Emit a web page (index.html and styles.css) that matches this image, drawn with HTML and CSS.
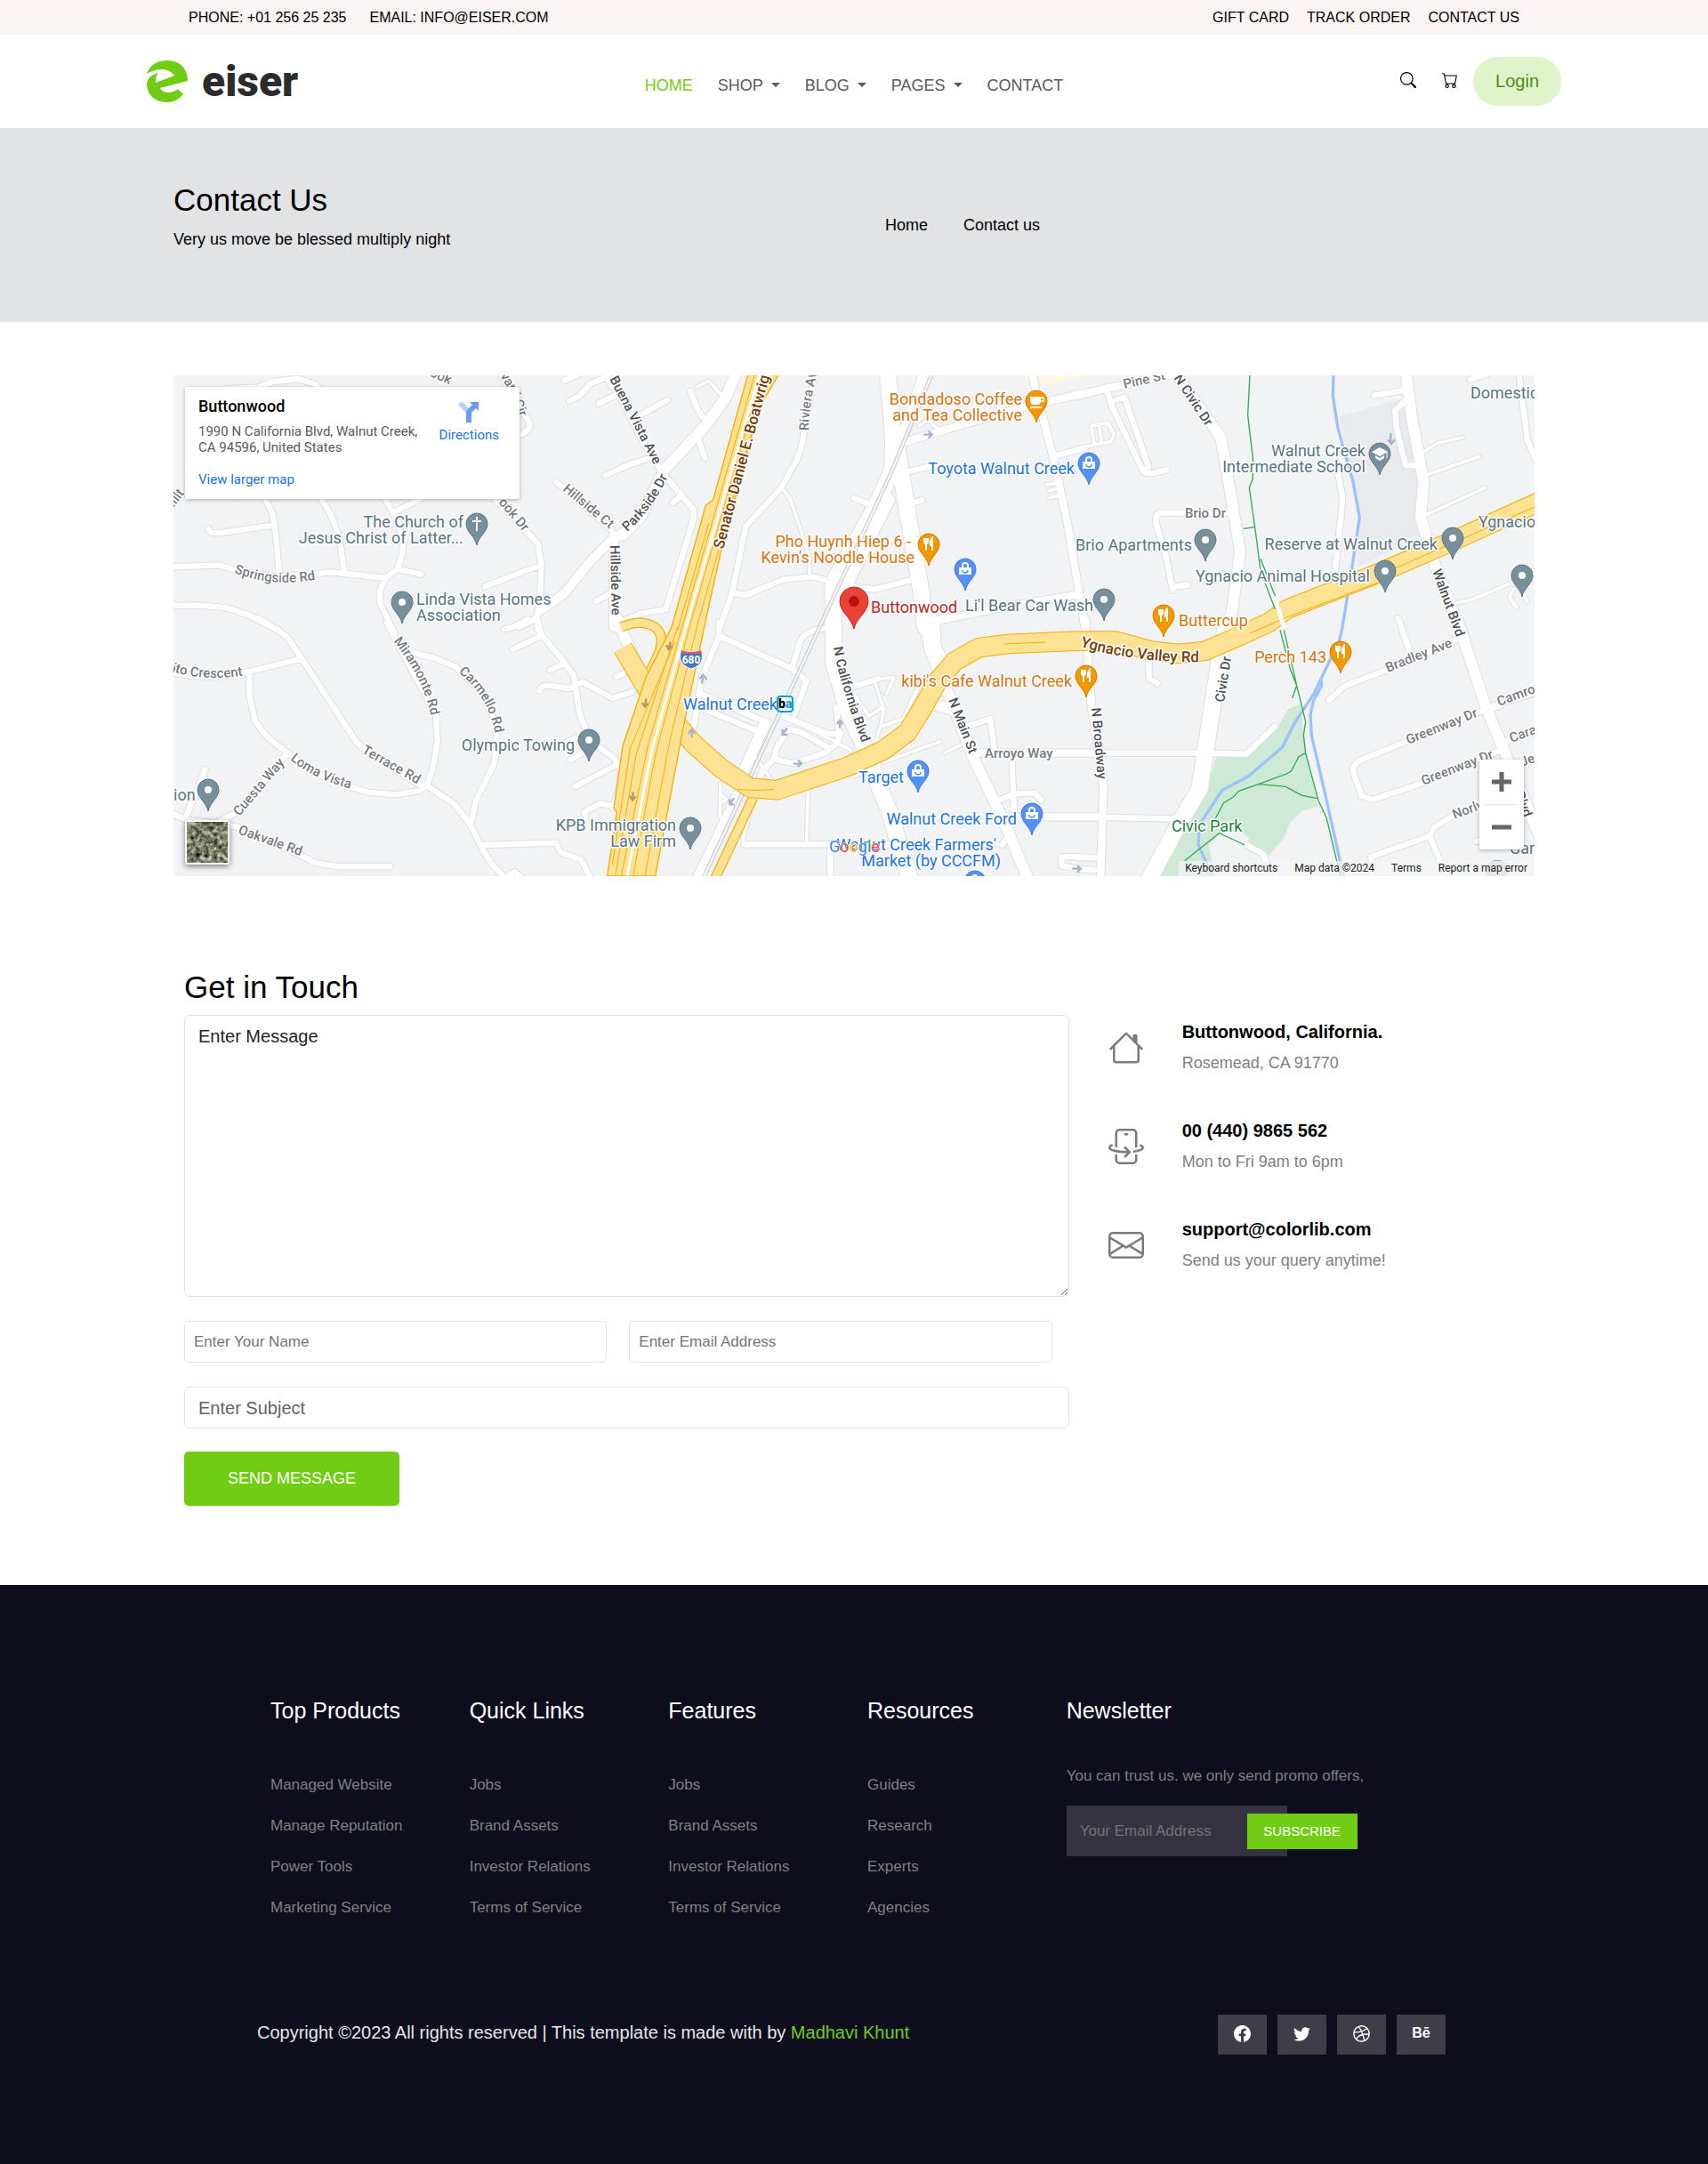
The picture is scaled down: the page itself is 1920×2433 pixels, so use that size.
FILE: index.html
```html
<!DOCTYPE html>
<html lang="en">
<head>
<meta charset="utf-8">
<meta name="viewport" content="width=device-width, initial-scale=1">
<title>Eiser - Contact Us</title>
<link rel="stylesheet" href="styles.css">
</head>
<body>
<div class="topbar">
  <div class="topbar-inner">
    <div class="topbar-group contact"><span>PHONE: +01 256 25 235</span><span>EMAIL: INFO@EISER.COM</span></div>
    <nav class="topbar-group" aria-label="Account"><a href="#">GIFT CARD</a><a href="#">TRACK ORDER</a><a href="#">CONTACT US</a></nav>
  </div>
</div>

<header class="header">
  <div class="header-inner">
    <a class="logo" href="#">
      <svg width="46" height="47" viewBox="0 0 46 47" aria-hidden="true"><path fill="#71cd14" d="M0 15C3 5 12 0 23 0C37 0 46 9 46 23L15 31C18 37 28 38 35 32L41 38C36 44 30 47 23 47C9 47 0 38 0 26C1 20 5 16 13 14C10 18 10 22 10 25L31 17C26 9 13 7 0 15Z"/></svg>
      <span>eiser</span>
    </a>
    <nav class="nav" aria-label="Main">
      <a class="active" href="#">HOME</a>
      <a class="drop" href="#">SHOP</a>
      <a class="drop" href="#">BLOG</a>
      <a class="drop" href="#">PAGES</a>
      <a href="#">CONTACT</a>
    </nav>
    <div class="actions">
      <a href="#" aria-label="Search"><svg width="18" height="18" viewBox="0 0 16 16" fill="currentColor"><path d="M11.742 10.344a6.5 6.5 0 1 0-1.397 1.398h-.001q.044.06.098.115l3.85 3.85a1 1 0 0 0 1.415-1.414l-3.85-3.85a1 1 0 0 0-.115-.1zM12 6.5a5.5 5.5 0 1 1-11 0 5.5 5.5 0 0 1 11 0"/></svg></a>
      <a href="#" aria-label="Cart"><svg width="18" height="18" viewBox="0 0 16 16" fill="currentColor"><path d="M0 1.500A.5.5 0 0 1 .5 1H2a.5.5 0 0 1 .485.379L2.890 3H14.500a.5.5 0 0 1 .491.592l-1.500 8A.5.5 0 0 1 13 12H4a.5.5 0 0 1-.491-.408L2.010 3.607 1.610 2H.5a.5.5 0 0 1-.5-.5M3.102 4l1.313 7h8.170l1.313-7zM5 12a2 2 0 1 0 0 4 2 2 0 0 0 0-4m7 0a2 2 0 1 0 0 4 2 2 0 0 0 0-4m-7 1a1 1 0 1 1 0 2 1 1 0 0 1 0-2m7 0a1 1 0 1 1 0 2 1 1 0 0 1 0-2"/></svg></a>
      <button class="login" type="button">Login</button>
    </div>
  </div>
</header>

<section class="banner">
  <div class="container banner-inner">
    <div>
      <h1>Contact Us</h1>
      <p>Very us move be blessed multiply night</p>
    </div>
    <nav class="crumbs" aria-label="Breadcrumb"><a href="#">Home</a><a href="#">Contact us</a></nav>
  </div>
</section>

<main class="container">
  <section class="map" aria-label="Map of Buttonwood, Walnut Creek">
    <svg class="map-art" viewBox="0 0 1530 563" preserveAspectRatio="xMidYMid slice">
      <defs>
        <path id="pin" d="M0 24C-2 14-12 9-12 0A12 12 0 1 1 12 0C12 9 2 14 0 24Z"/>
        <g id="pin-grey"><use href="#pin" fill="#78909c" stroke="#5f7681"/><circle r="4" fill="#fff"/></g>
        <g id="pin-food"><use href="#pin" fill="#f29900" stroke="#e37400"/><path d="M-5 -7v4q0 2 2 2v8M-3 -7v6M-1 -7v4q0 2-2 2M4 7v-14q-3 3-2 8h2" fill="none" stroke="#fff" stroke-width="2"/></g>
        <g id="pin-shop"><use href="#pin" fill="#5491f5" stroke="#3b78e7"/><path d="M-7 -2H7V6H-7Z" fill="#fff"/><path d="M-3 -2v-2a3 3 0 0 1 6 0v2" fill="none" stroke="#fff" stroke-width="2"/><path d="M-3 1a3 3 0 0 0 6 0" fill="none" stroke="#5491f5" stroke-width="1.500"/></g>
        <g id="roads" fill="none" stroke-linecap="round" stroke-linejoin="round">
          <g transform="translate(-15 -21)">
            <path class="w20" d="M215 65L300 62 350 42 435 33 490 50 520 75M320 430L350 490 358 540 372 690M133 540Q140 555 170 553L350 527M510 430L550 500 575 570 592 690M730 440L770 510 790 590 785 630 770 675 730 705 710 750 712 790 760 890M755 485L860 430M0 667L170 662 215 675 350 700 500 690 540 685 600 690 730 705M770 675L850 692M0 797L120 798 200 806 270 830 370 880M1100 440L1190 530 1245 590 1255 660 1252 780 1240 840 1245 880M1065 733L1215 675 1255 665M1305 380L1330 400 1490 540M1440 783L1490 755M1240 840L1180 870M1335 38L1385 15M1350 108L1385 90 1420 50 1480 25M1450 115L1510 85M1470 360L1560 318M1120 20L1215 180Q1225 200 1190 220"/>
            <path class="w30" d="M1560 530L1490 580 1420 650 1330 760 1250 815M1500 560L1500 870"/>
          </g>
          <g transform="translate(1515 -21)">
            <path class="w36" d="M385 10L345 100 280 190 140 340 60 500 0 560M1020 10L940 240 890 400M900 440L740 760"/>
            <path class="w20" d="M-60 20L0 110 60 230 130 345 240 475 238 510 145 810 60 825 0 850M0 330L90 300M50 160L150 105M228 75L255 140 280 175M255 235L277 300M170 450L200 425M650 0L612 205 608 240 590 300 535 400 415 530 370 750 325 880M370 755L415 762 540 710 640 700 700 715M965 345L1050 325M780 435L830 455M980 450L1010 442M775 735L850 742 970 712M1450 295L1560 265"/>
            <path class="w12" d="M250 60L290 40 330 85M540 405L565 440 600 540 630 640 630 700M1430 390L1460 385M1435 410L1465 405M1440 433L1470 428M1000 190L1030 170 1060 200"/>
            <path class="w54" d="M893 0L912 230 910 340 850 470 710 720 710 870M920 230L960 480 1005 740 1020 870"/>
            <path class="w26" d="M955 245L1100 200 1350 130 1560 80M1378 0L1400 100 1450 290 1500 520 1560 880M1050 850L1300 800 1540 760"/>
          </g>
          <g transform="translate(3045 -21) scale(1.014 1)">
            <path class="w26" d="M0 90L100 65 340 15"/>
            <path class="w20" d="M100 70L120 130 220 340Q225 355 260 350L300 340M130 105L160 95 240 330 220 340M520 485L280 485Q260 490 265 520L300 640 320 745M320 735L370 728M860 300L885 430 880 500 860 680M990 88L1090 72M1095 105L1060 140 1065 200 1095 325 1140 325M1310 35L1370 15M1470 0L1500 240 1530 310M1070 840L1110 955"/>
            <path class="w12" d="M0 270L60 255 115 245 125 220 105 180 50 190 60 255M75 190L85 250M1145 285L1200 250 1285 230M1170 355L1340 295M1165 490L1360 400M1250 790L1310 780 1450 720 1530 690M1455 740L1440 770 1465 805M1480 740L1500 785"/>
            <path class="w36" d="M320 0L480 230 510 400 545 620 510 870M1095 0L1115 160 1155 380 1145 500 1185 640 1280 890"/>
          </g>
          <g transform="translate(-15 834)">
            <path class="w20" d="M300 -15L350 15 400 50 450 125 630 400 650 420 840 545 870 550 960 610 1015 680 1060 770 1090 815 1140 870M0 165Q130 200 270 165L445 122M270 165L272 250 290 330 330 385 400 440 500 510 600 550 670 572 760 580 840 568 870 550 890 490 905 400 900 310 765 60 735 0M805 105L830 103 890 118 965 148 1060 240 1105 350 1105 420 1095 480 1035 600 1018 680M400 440L230 640 170 670M122 495L55 660M0 640L60 665 180 680 230 690 445 785 495 812 570 822 745 822M1060 750L1305 743 1320 775 1390 800 1425 870M1245 0L1255 40 1330 130 1365 180 1385 310 1410 370 1450 420 1500 455 1525 500 1515 570 1495 625M1495 618L1455 610 1400 640 1405 660M1130 22L1160 15 1210 -10M1160 90L1255 45M1285 160L1330 140M1250 230Q1255 212 1275 212L1350 222 1395 200 1495 255 1560 235M1355 462L1410 430M1370 552L1510 480M1340 405L1390 380M1510 182L1550 165M1140 860L1165 840 1190 860"/>
            <path class="w36" d="M1510 -15L1560 100"/>
          </g>
          <g transform="translate(1515 834)">
            <path class="w20" d="M325 0L325 45 265 190 235 380 285 440M325 45L570 155 620 195 580 310M570 155L600 60Q620 25 680 20M265 240L480 335M270 290L465 370 490 335M540 315L690 375 730 375 720 285M510 460L520 420 560 360 600 370 690 420M735 375L720 410 680 440 575 475 510 460 470 500 460 530M410 748L900 748M700 760L700 870M1160 350L1240 325 1255 440M1313 475L1320 640M1255 605L1320 578 1390 575 1412 600M1130 765L1165 870M1280 750L1310 700M1560 790L1480 790 1480 820 1560 835M750 225L860 190M780 515L860 480"/>
            <path class="w26" d="M1200 440L1600 440M1280 655L1600 655"/>
            <path class="w12" d="M560 320L770 430M625 560L620 740M440 600L405 730 415 748M780 240L830 315 870 290M850 200L880 290 870 350 860 380M870 350L945 325 1000 210M860 190L915 185 890 240M880 470L1070 402M1085 438L1150 410M470 370L440 440 500 530M330 540L328 655M330 580L350 595 330 610M900 748L1280 748"/>
            <path class="w54" d="M710 -20L712 140 760 300 820 430 860 540 900 640 970 870"/>
            <path class="w36" d="M1020 -20L1035 90 1110 270 1180 450 1280 660 1370 870M1050 -20L1055 80 1110 200M480 340L400 520M390 580L250 870M1040 275L1100 290"/>
          </g>
          <g transform="translate(3045 834) scale(1.014 1)">
            <path class="w20" d="M0 440L410 440 565 443 660 350M0 655L350 662M0 793L70 793M0 830L60 835M240 120L242 190 270 205M840 262L890 215 1030 160 1270 55M1410 280L1330 305 1100 400 935 468 920 490 925 520 950 585 985 597 1140 545 1410 430M1390 280L1530 235M1420 405L1530 360M1075 0L1110 100M1270 640L1190 690 1175 720 980 790 985 870M1175 720L1220 830M565 750L620 780 640 830M1330 738L1400 720"/>
            <path class="w26" d="M30 -10L50 280 90 550 80 870"/>
            <path class="w54" d="M500 0L480 100 410 560 340 680 240 870"/>
            <path class="w36" d="M1270 0L1360 280 1430 450 1540 720"/>
          </g>
        </g>
        <path id="valley" fill="none" stroke-linejoin="round" d="M1515 919L1595 1054 1685 1164 1755 1244 1845 1324 1945 1391 2035 1399 2135 1366 2275 1319 2395 1264 2475 1204 2525 1124 2575 1034 2635 964 2715 919 2815 906 3045 896 3177 896 3298 929 3390 939 3481 929 3572 889 3694 834 3755 789 4059 669 4292 569 4620 420"/>
        <path id="sr680" d="M1937 -1L1820 419 1795 439 1680 849 1595 1014 1515 1250 1485 1459 1495 1474 1463 1689 1625 1689 1720 1184 1790 849 1845 599 1975 109 2040 -1Z"/>
        <filter id="ground" x="0" y="0" width="100%" height="100%" color-interpolation-filters="sRGB"><feTurbulence type="fractalNoise" baseFrequency=".2" numOctaves="3" seed="8"/><feColorMatrix values=".9 .6 0 0 -.27  .9 .6 0 0 -.26  .9 .6 0 0 -.34  0 0 0 0 1"/></filter>
        <path id="t1" d="M68 222Q112 239 164 229"/>
        <path id="t2" d="M437 129L494 176"/>
        <path id="t3" d="M491 191L493 280"/>
        <path id="t4" d="M490 4L543 106"/>
        <path id="t5" d="M510 176Q540 150 560 105"/>
        <path id="t6" d="M618 196L684 -50"/>
        <path id="t7" d="M714 62Q714 30 730 -30"/>
        <path id="t8" d="M247 299Q282 340 291 390"/>
        <path id="t9" d="M320 334Q354 360 362 405"/>
        <path id="t10" d="M211 424L280 463"/>
        <path id="t11" d="M131 432Q160 456 208 467"/>
        <path id="t12" d="M74 496L130 430"/>
        <path id="t13" d="M72 515L150 543"/>
        <path id="t14" d="M-2 333Q40 346 92 335"/>
        <path id="t15" d="M-4 154L24 118"/>
        <path id="t16" d="M275 -5L334 21"/>
        <path id="t17" d="M354 -20L378 18 396 66"/>
        <path id="t18" d="M365 143L398 182"/>
        <path id="t19" d="M1415 220L1446 305"/>
        <path id="t20" d="M1124 3L1166 66"/>
        <path id="t21" d="M1069 15L1122 3"/>
        <path id="t22" d="M1181 368L1191 305"/>
        <path id="t23" d="M1032 374L1040 465"/>
        <path id="t24" d="M1365 334L1450 300"/>
        <path id="t25" d="M1388 415L1480 378"/>
        <path id="t26" d="M1405 461L1495 426"/>
        <path id="t27" d="M1490 372L1550 350"/>
        <path id="t28" d="M1504 413L1560 392"/>
        <path id="t29" d="M1440 499L1490 480"/>
        <path id="t30" d="M1508 470L1526 520"/>
        <path id="t31" d="M742 306Q748 345 778 424"/>
        <path id="t32" d="M871 365L898 435"/>
        <path id="t33" d="M1019 305Q1090 325 1170 322"/>
        <path id="t34" d="M1516 440L1560 424"/>
      </defs>
      <rect width="1530" height="563" fill="#f1f3f4"/>
      <g transform="scale(.33333)">
        <path fill="#e8eaed" d="M3932 139L4145 79 4191 299 4206 359 4191 479 4206 539 3993 649 4000 479 3978 359Z"/>
        <path fill="#fef7e0" d="M2855 0H3080L2960 30Q2900 35 2855 0Z"/>
        <path fill="#ceead6" d="M3800 1109L3760 1124 3724 1184 3618 1284 3516 1289 3490 1374 3450 1444 3400 1554 3324 1700H3515L3491 1584 3527 1546 3592 1534 3628 1559 3618 1584 3694 1619 3745 1559 3765 1509 3805 1469 3861 1452 3856 1434 3821 1274Z"/>
        <g fill="none" stroke="#9dc1fa" stroke-width="10">
          <path d="M3912 0L3910 69 3927 179 3978 359 4000 479 3973 659 3942 849 3932 894 3846 1074 3780 1174 3740 1254 3623 1354 3537 1399 3461 1514 3456 1584 3510 1700M3871 1024V1049L3844 1099 3834 1144 3838 1214 3882 1404 3948 1700"/>
        </g>
        <use href="#roads" class="casing"/>
        <use href="#roads" class="surface"/>
        <path d="M2560 -10L2420 329 1785 1700" fill="none" stroke="#c9ccd1" stroke-width="14"/>
        <path d="M2560 -10L2420 329 1785 1700" fill="none" stroke="#f5f6f7" stroke-width="7"/>
        <path d="M1510 849Q1580 820 1625 850Q1660 880 1635 940L1580 1060M1955 1424L1825 1700" fill="none" stroke="#f9ab00" stroke-width="34"/>
        <path d="M1510 849Q1580 820 1625 850Q1660 880 1635 940L1580 1060M1955 1424L1825 1700" fill="none" stroke="#fde293" stroke-width="27"/>
        <use href="#valley" stroke="#f9ab00" stroke-width="68"/>
        <use href="#valley" stroke="#fde293" stroke-width="62"/>
        <path d="M1900 1397Q1960 1402 2025 1397M3630 870L3750 818 4060 700M4110 655L4600 440M2800 906L2940 900" fill="none" stroke="#f9ab00" stroke-width="3"/>
        <use href="#sr680" fill="#fde293" stroke="#f9ab00" stroke-width="4"/>
        <g fill="none" stroke="#f9ab00" stroke-width="3">
          <path d="M1960 -1L1715 849 1600 1250 1510 1689M1985 -1L1740 849 1625 1280 1550 1689M2005 0L1765 849 1670 1250 1590 1689M1805 500L1700 860M1700 849L1560 1280 1490 1689M1690 900L1540 1260 1480 1650"/>
        </g>
        <path d="M1975 0L1728 849 1613 1265 1530 1689" fill="none" stroke="#fff" stroke-width="9"/>
        <g fill="none" stroke="#34a853" stroke-width="4">
          <path d="M3630 -1L3623 134 3640 279V349L3628 379 3648 519 3666 659 3715 789M3666 619L3715 744M3608 517L3646 512M3732 859L3767 994 3788 1046 3773 1089M3745 859L3788 1046 3818 1169 3811 1214 3818 1274 3861 1434 3889 1494 3922 1634 3940 1700M3818 1274L3795 1286 3770 1334 3755 1344 3659 1379 3593 1402 3574 1422 3542 1442 3514 1494M3659 1379L3750 1387 3806 1417 3858 1427M3410 1637L3527 1544 3613 1584"/>
        </g>
        <path d="M3715 750L3745 850" stroke="#fff" stroke-width="14"/>
        <g fill="none" stroke="#aab0cc" stroke-width="7">
          <path d="M2530 200h28m-12-12l12 12-12 12M1782 1040l4-28m-12 12l12-14 12 16M1748 1222v-26m-12 12l12-14 12 14M2247 1190v-24m-10 10l10-12 10 12M2090 1310h26m-10-12l12 10-12 12M2070 1190l-16 20m0-16v18h18M1890 1425l-12 20m-2-16v18h16M4105 195v34m-10-12l12 14 12-14M3030 1664h28m-10-10l12 10-12 12"/>
          <path stroke="#b09a60" d="M1676 899l-6 24m-8-14l8 16 12-12M1594 1090l-4 26m-10-12l10 14 10-12M1550 1405l-2 26m-9-12l9 14 11-12"/>
        </g>
      </g>

      <g class="lbl road">
        <text><textPath href="#t1">Springside Rd</textPath></text>
        <text><textPath href="#t2">Hillside Ct</textPath></text>
        <text><textPath href="#t8">Miramonte Rd</textPath></text>
        <text><textPath href="#t9">Carmello Rd</textPath></text>
        <text><textPath href="#t10">Terrace Rd</textPath></text>
        <text><textPath href="#t11">Loma Vista</textPath></text>
        <text><textPath href="#t12">Cuesta Way</textPath></text>
        <text><textPath href="#t13">Oakvale Rd</textPath></text>
        <text><textPath href="#t14">ito Crescent</textPath></text>
        <text><textPath href="#t15">Hillt</textPath></text>
        <text><textPath href="#t16">brook</textPath></text>
        <text><textPath href="#t17">Harvard Cir</textPath></text>
        <text><textPath href="#t18">ook Dr</textPath></text>
        <text><textPath href="#t7">Riviera Ave</textPath></text>
        <text><textPath href="#t21">Pine St</textPath></text>
        <text><textPath href="#t24">Bradley Ave</textPath></text>
        <text><textPath href="#t25">Greenway Dr</textPath></text>
        <text><textPath href="#t26">Greenway Dr</textPath></text>
        <text><textPath href="#t27">Camro</textPath></text>
        <text><textPath href="#t28">Cara</textPath></text>
        <text><textPath href="#t29">Norlyn</textPath></text>
        <text><textPath href="#t34">Jer</textPath></text>
        <text x="1137" y="160">Brio Dr</text>
        <text x="912" y="430">Arroyo Way</text>
      </g>
      <g class="lbl road main-road">
        <text><textPath href="#t3">Hillside Ave</textPath></text>
        <text><textPath href="#t4">Buena Vista Ave</textPath></text>
        <text><textPath href="#t5">Parkside Dr</textPath></text>
        <text><textPath href="#t19">Walnut Blvd</textPath></text>
        <text><textPath href="#t20">N Civic Dr</textPath></text>
        <text><textPath href="#t22">Civic Dr</textPath></text>
        <text><textPath href="#t23">N Broadway</textPath></text>
        <text><textPath href="#t30">Blvd</textPath></text>
        <text><textPath href="#t31">N California Blvd</textPath></text>
        <text><textPath href="#t32">N Main St</textPath></text>
      </g>
      <g class="lbl highway">
        <text><textPath href="#t6">Senator Daniel E. Boatwright</textPath></text>
        <text><textPath href="#t33">Ygnacio Valley Rd</textPath></text>
      </g>

      <use href="#pin-grey" x="257" y="255"/><use href="#pin-grey" x="1160" y="185"/>
      <use href="#pin-grey" x="1438" y="183"/><use href="#pin-grey" x="1362" y="220"/>
      <use href="#pin-grey" x="1516" y="225"/><use href="#pin-grey" x="1046" y="252"/>
      <use href="#pin-grey" x="467" y="410"/><use href="#pin-grey" x="39" y="466"/>
      <use href="#pin-grey" x="581" y="509"/><use href="#pin-grey" x="1488" y="557" opacity=".5"/>
      <g transform="translate(341 167)"><use href="#pin" fill="#78909c" stroke="#5f7681"/><path d="M0 -8V8M-5 -3H5" stroke="#fff" stroke-width="2"/></g>
      <g transform="translate(1356 88)"><use href="#pin" fill="#78909c" stroke="#5f7681"/><path d="M-9 -2L0 -7 9 -2 0 3ZM-5 2L0 5 5 2V5L0 8-5 5Z" fill="#fff"/><path d="M8 -2V5" stroke="#fff"/></g>
      <g transform="translate(970 29)"><use href="#pin" fill="#f29900" stroke="#e37400"/><path d="M-7 -5H5V0Q5 4 1 4H-3Q-7 4-7 0ZM-7 6H6V8H-7Z" fill="#fff"/><path d="M5 -4H8V0H5" fill="none" stroke="#fff" stroke-width="1.500"/></g>
      <use href="#pin-food" x="849" y="190"/><use href="#pin-food" x="1113" y="270"/>
      <use href="#pin-food" x="1312" y="311"/><use href="#pin-food" x="1026" y="338"/>
      <use href="#pin-shop" x="1029" y="99"/><use href="#pin-shop" x="890" y="218"/>
      <use href="#pin-shop" x="837" y="445"/><use href="#pin-shop" x="965" y="493"/><use href="#pin-shop" x="901" y="569"/>
      <g transform="translate(765 254)"><path d="M0 31C-3 18-16 12-16 0A16 16 0 1 1 16 0C16 12 3 18 0 31Z" fill="#ea4335" stroke="#c5221f"/><circle r="6" fill="#b31412"/></g>

      <g class="lbl place grey">
        <g class="end">
          <text x="326" y="171">The Church of</text><text x="326" y="189">Jesus Christ of Latter...</text>
          <text x="1340" y="91">Walnut Creek</text><text x="1340" y="109">Intermediate School</text>
          <text x="1145" y="197">Brio Apartments</text><text x="1421" y="196">Reserve at Walnut Creek</text>
          <text x="1345" y="232">Ygnacio Animal Hospital</text><text x="451" y="422">Olympic Towing</text>
          <text x="565" y="512">KPB Immigration</text><text x="565" y="530">Law Firm</text>
        </g>
        <text x="273" y="258">Linda Vista Homes</text><text x="273" y="276">Association</text>
        <text x="890" y="265">Li'l Bear Car Wash</text><text x="1458" y="26">Domestic</text>
        <text x="1467" y="171">Ygnacio</text><text x="0" y="478">ion</text><text x="1502" y="538">Gary</text>
      </g>
      <g class="lbl place orange">
        <g class="end">
          <text x="954" y="33">Bondadoso Coffee</text><text x="954" y="51">and Tea Collective</text>
          <text x="829" y="193">Pho Huynh Hiep 6 -</text><text x="833" y="211">Kevin's Noodle House</text>
          <text x="1296" y="323">Perch 143</text><text x="1010" y="350">kibi's Cafe Walnut Creek</text>
        </g>
        <text x="1130" y="282">Buttercup</text>
      </g>
      <g class="lbl place blue">
        <g class="end">
          <text x="1013" y="111">Toyota Walnut Creek</text><text x="821" y="458">Target</text>
          <text x="948" y="505">Walnut Creek Ford</text><text x="925" y="534">Walnut Creek Farmers'</text><text x="930" y="552">Market (by CCCFM)</text>
        </g>
        <text x="573" y="376">Walnut Creek</text>
      </g>
      <text class="lbl place red" x="784" y="267">Buttonwood</text>
      <text class="lbl place green" x="1122" y="513">Civic Park</text>

      <g transform="translate(582 318)"><path d="M-11 -9Q0 -5 11 -9Q15 3 8 8Q4 11 0 12Q-4 11-8 8Q-15 3-11 -9Z" fill="#3f76c9" stroke="#fff"/><path d="M-11 -9Q0 -5 11 -9L12 -5H-12Z" fill="#d6605b"/><text class="shield" x="0" y="6">680</text></g>
      <g transform="translate(679 361)"><rect width="17" height="17" rx="3" fill="#fff" stroke="#0b9ddb" stroke-width="2"/><text class="bart" x="1" y="13">b<tspan fill="#0b9ddb">a</tspan></text></g>
      <text class="google" x="737" y="536"><tspan fill="#4285f4">G</tspan><tspan fill="#ea4335">o</tspan><tspan fill="#fbbc04">o</tspan><tspan fill="#4285f4">g</tspan><tspan fill="#34a853">l</tspan><tspan fill="#ea4335">e</tspan></text>
    </svg>

    <div class="map-card">
      <div class="map-place">
        <strong>Buttonwood</strong>
        <address>1990 N California Blvd, Walnut Creek, CA 94596, United States</address>
        <a href="#">View larger map</a>
      </div>
      <a class="directions" href="#">
        <svg width="24" height="24" viewBox="0 0 24 24" aria-hidden="true"><path d="M0 4L4 0 13 9 9 13Z" fill="#b6cffb"/><path d="M9 24V14Q9 11 11 9L16 4 13 1H23V11L20 8 15 13V24Z" fill="#6a9af8"/></svg>
        Directions
      </a>
    </div>
    <button class="satellite" type="button" aria-label="Show satellite imagery"><svg width="46" height="46" aria-hidden="true"><rect width="46" height="46" filter="url(#ground)"/></svg></button>
    <div class="zoom">
      <button type="button" aria-label="Zoom in"><svg width="22" height="22" viewBox="0 0 22 22"><path d="M11 0V22M0 11H22" stroke="#666" stroke-width="5"/></svg></button>
      <button type="button" aria-label="Zoom out"><svg width="22" height="22" viewBox="0 0 22 22"><path d="M0 11H22" stroke="#666" stroke-width="5"/></svg></button>
    </div>
    <div class="map-terms"><a href="#">Keyboard shortcuts</a><span>Map data ©2024</span><a href="#">Terms</a><a href="#">Report a map error</a></div>
  </section>

  <section class="contact-grid">
    <form class="contact-form">
      <h2>Get in Touch</h2>
      <textarea class="field tall" aria-label="Message">Enter Message</textarea>
      <div class="pair">
        <input class="field small" type="text" placeholder="Enter Your Name" aria-label="Name">
        <input class="field small" type="email" placeholder="Enter Email Address" aria-label="Email">
      </div>
      <input class="field" type="text" placeholder="Enter Subject" aria-label="Subject">
      <button class="send" type="submit">SEND MESSAGE</button>
    </form>
    <div class="info">
      <div class="info-item">
        <svg width="40" height="40" viewBox="0 0 16 16" aria-hidden="true"><path d="M8.707 1.500a1 1 0 0 0-1.414 0L.646 8.146a.5.5 0 0 0 .708.708L2 8.207V13.500A1.500 1.500 0 0 0 3.500 15h9a1.500 1.500 0 0 0 1.500-1.500V8.207l.646.647a.5.5 0 0 0 .708-.708L13 5.793V2.500a.5.5 0 0 0-.5-.5h-1a.5.5 0 0 0-.5.5v1.293zM13 7.207V13.500a.5.5 0 0 1-.5.5h-9a.5.5 0 0 1-.5-.5V7.207l5-5z"/></svg>
        <div><h3>Buttonwood, California.</h3><p>Rosemead, CA 91770</p></div>
      </div>
      <div class="info-item">
        <svg width="40" height="40" viewBox="0 0 16 16" aria-hidden="true"><path d="M11 1H5a1 1 0 0 0-1 1v6a.5.5 0 0 1-1 0V2a2 2 0 0 1 2-2h6a2 2 0 0 1 2 2v6a.5.5 0 0 1-1 0V2a1 1 0 0 0-1-1m1 13a1 1 0 0 1-1 1H5a1 1 0 0 1-1-1v-2a.5.5 0 0 0-1 0v2a2 2 0 0 0 2 2h6a2 2 0 0 0 2-2v-2a.5.5 0 0 0-1 0zM1.713 7.954a.5.5 0 1 0-.419-.908c-.347.16-.654.348-.882.57C.184 7.842 0 8.139 0 8.500c0 .546.408.94.823 1.201.44.278 1.043.51 1.745.696C3.978 10.773 5.898 11 8 11q.148 0 .294-.002l-1.148 1.148a.5.5 0 0 0 .708.708l2-2a.5.5 0 0 0 0-.708l-2-2a.5.5 0 1 0-.708.708l1.145 1.144L8 10c-2.040 0-3.870-.221-5.174-.569-.656-.175-1.151-.374-1.470-.575C1.012 8.639 1 8.506 1 8.500c0-.003 0-.059.112-.17.115-.112.31-.242.6-.376Zm12.993-.908a.5.5 0 0 0-.419.908c.292.134.486.264.6.377.113.11.113.166.113.169s0 .065-.13.187c-.132.122-.352.26-.677.4-.645.28-1.596.523-2.763.687a.5.5 0 0 0 .14.99c1.212-.17 2.260-.43 3.020-.758.38-.164.713-.357.96-.587.246-.229.45-.537.45-.919 0-.362-.184-.66-.412-.883s-.535-.411-.882-.571M7.500 2a.5.5 0 0 0 0 1h1a.5.5 0 0 0 0-1z"/></svg>
        <div><h3>00 (440) 9865 562</h3><p>Mon to Fri 9am to 6pm</p></div>
      </div>
      <div class="info-item">
        <svg width="40" height="40" viewBox="0 0 16 16" aria-hidden="true"><path d="M0 4a2 2 0 0 1 2-2h12a2 2 0 0 1 2 2v8a2 2 0 0 1-2 2H2a2 2 0 0 1-2-2zm2-1a1 1 0 0 0-1 1v.217l7 4.200 7-4.200V4a1 1 0 0 0-1-1zm13 2.383-4.708 2.825L15 11.105zm-.034 6.876-5.640-3.471L8 9.583l-1.326-.795-5.640 3.470A1 1 0 0 0 2 13h12a1 1 0 0 0 .966-.741M1 11.105l4.708-2.897L1 5.383z"/></svg>
        <div><h3>support@colorlib.com</h3><p>Send us your query anytime!</p></div>
      </div>
    </div>
  </section>
</main>

<footer class="footer">
  <div class="footer-inner">
    <div class="footer-cols">
      <div><h2>Top Products</h2><ul><li><a href="#">Managed Website</a></li><li><a href="#">Manage Reputation</a></li><li><a href="#">Power Tools</a></li><li><a href="#">Marketing Service</a></li></ul></div>
      <div><h2>Quick Links</h2><ul><li><a href="#">Jobs</a></li><li><a href="#">Brand Assets</a></li><li><a href="#">Investor Relations</a></li><li><a href="#">Terms of Service</a></li></ul></div>
      <div><h2>Features</h2><ul><li><a href="#">Jobs</a></li><li><a href="#">Brand Assets</a></li><li><a href="#">Investor Relations</a></li><li><a href="#">Terms of Service</a></li></ul></div>
      <div><h2>Resources</h2><ul><li><a href="#">Guides</a></li><li><a href="#">Research</a></li><li><a href="#">Experts</a></li><li><a href="#">Agencies</a></li></ul></div>
      <div>
        <h2>Newsletter</h2>
        <p>You can trust us. we only send promo offers,</p>
        <form class="subscribe">
          <input type="email" placeholder="Your Email Address" aria-label="Your email address">
          <button type="submit">SUBSCRIBE</button>
        </form>
      </div>
    </div>
    <div class="footer-bottom">
      <p>Copyright ©2023 All rights reserved | This template is made with by <a href="#">Madhavi Khunt</a></p>
      <div class="social">
        <a href="#" aria-label="Facebook"><svg width="19" height="19" viewBox="0 0 16 16" fill="#fff"><path d="M16 8.049c0-4.446-3.582-8.050-8-8.050C3.580 0-.002 3.603-.002 8.050c0 4.017 2.926 7.347 6.750 7.951v-5.625h-2.030V8.050H6.750V6.275c0-2.017 1.195-3.131 3.022-3.131.876 0 1.791.157 1.791.157v1.980h-1.009c-.993 0-1.303.621-1.303 1.258v1.510h2.218l-.354 2.326H9.250V16c3.824-.604 6.750-3.934 6.750-7.951"/></svg></a>
        <a href="#" aria-label="Twitter"><svg width="19" height="19" viewBox="0 0 16 16" fill="#fff"><path d="M5.026 15c6.038 0 9.341-5.003 9.341-9.334q.002-.211-.006-.422A6.700 6.700 0 0 0 16 3.542a6.700 6.700 0 0 1-1.889.518 3.300 3.300 0 0 0 1.447-1.817 6.500 6.500 0 0 1-2.087.793A3.286 3.286 0 0 0 7.875 6.030a9.320 9.320 0 0 1-6.767-3.429 3.290 3.290 0 0 0 1.018 4.382A3.300 3.300 0 0 1 .64 6.575v.045a3.290 3.290 0 0 0 2.632 3.218 3.200 3.200 0 0 1-.865.115 3 3 0 0 1-.614-.057 3.280 3.280 0 0 0 3.067 2.277A6.600 6.600 0 0 1 .78 13.580a6 6 0 0 1-.78-.045A9.340 9.340 0 0 0 5.026 15"/></svg></a>
        <a href="#" aria-label="Dribbble"><svg width="19" height="19" viewBox="0 0 16 16" fill="none" stroke="#fff" stroke-width="1.200"><circle cx="8" cy="8" r="7.300"/><path d="M5.300 1.200Q9 6 10.800 14.700M.8 6.600Q8 7 13.200 2.900M3 13.300Q6 7.500 15.300 8.600"/></svg></a>
        <a class="behance" href="#" aria-label="Behance">Bē</a>
      </div>
    </div>
  </div>
</footer>
</body>
</html>
```
FILE: styles.css
```css
* { box-sizing: border-box; }
body {
  margin: 0;
  background: #fff;
  color: #000;
  font-family: "Liberation Sans", Arial, sans-serif;
  font-size: 18px;
  line-height: 26px;
}
h1, h2, h3, p, ul { margin: 0; padding: 0; font-weight: 400; }
ul { list-style: none; }
a { color: inherit; text-decoration: none; }
svg { display: block; }
button, input, textarea { font-family: inherit; }
button { cursor: pointer; border: 0; }

.container { max-width: 1530px; margin: 0 auto; }

/* Top bar */
.topbar { background: #faf4f4; }
.topbar-inner {
  max-width: 1496px;
  margin: 0 auto;
  padding: 8px 0 7px;
  display: flex;
  justify-content: space-between;
  font-size: 16px;
  line-height: 24px;
}
.topbar-group { display: flex; gap: 20px; }
.topbar-group.contact { gap: 26px; }

/* Header */
.header-inner {
  max-width: 1590px;
  min-height: 105px;
  margin: 0 auto;
  display: grid;
  grid-template-columns: 1fr auto 1fr;
  align-items: center;
}
.logo { display: flex; align-items: center; gap: 16px; }
.logo span {
  color: #2c2c2c;
  font-family: Roboto, sans-serif;
  font-weight: 900;
  font-size: 48px;
  line-height: 47px;
}
.nav { display: flex; gap: 28px; padding-top: 8px; color: #5a5a5a; }
.nav .active { color: #71cd14; }
.drop { display: flex; align-items: center; gap: 9px; }
.drop::after {
  content: "";
  border: 5px solid transparent;
  border-top-color: currentColor;
  border-bottom: 0;
}
.actions { display: flex; align-items: center; justify-content: flex-end; gap: 29px; }
.actions a { padding-bottom: 4px; }
.login {
  margin-left: -12px;
  padding: 0 25px;
  height: 55px;
  border-radius: 28px;
  background: #dff4cb;
  color: #4e8c10;
  font-size: 20px;
}

/* Page banner */
.banner { background: #e2e3e5; }
.banner-inner {
  min-height: 218px;
  display: grid;
  grid-template-columns: 1fr 1fr;
  align-items: center;
}
.banner-inner > div { padding-bottom: 20px; }
h1, .contact-form h2 { font-size: 35px; line-height: 42px; }
.banner p { margin-top: 10px; }
.crumbs { display: flex; gap: 40px; padding-left: 35px; }

/* Map */
.map {
  position: relative;
  margin-top: 60px;
  height: 563px;
  overflow: hidden;
  font-family: Roboto, sans-serif;
}
.map-art { width: 100%; height: 100%; }
.w12 { stroke-width: calc(11px + var(--edge)); }
.w20 { stroke-width: calc(19px + var(--edge)); }
.w26 { stroke-width: calc(25px + var(--edge)); }
.w30 { stroke-width: calc(30px + var(--edge)); }
.w36 { stroke-width: calc(36px + var(--edge)); }
.w54 { stroke-width: calc(54px + var(--edge)); }
.casing { stroke: #dcdee2; --edge: 6px; }
.surface { stroke: #fff; --edge: 0px; }
.lbl { stroke: #fff; stroke-width: 3px; stroke-linejoin: round; paint-order: stroke; }
.road { fill: #75797e; font-size: 15px; font-weight: 500; }
.main-road { fill: #4d5156; }
.highway { fill: #733b05; font-size: 17px; font-weight: 500; }
.place { font-size: 18px; }
.end { text-anchor: end; }
.grey { fill: #56747f; }
.orange { fill: #d9730b; }
.blue { fill: #1a73e8; }
.red { fill: #c5221f; }
.green { fill: #188038; }
.shield { fill: #fff; font-size: 12px; font-weight: 700; text-anchor: middle; }
.bart { font-size: 14px; font-weight: 900; }
.google { font-size: 18px; stroke: #fff; stroke-width: 1px; paint-order: stroke; }

.map-card {
  position: absolute;
  left: 13px;
  top: 13px;
  width: 376px;
  padding: 13px 23px 13px 15px;
  display: flex;
  justify-content: space-between;
  background: #fff;
  border-radius: 2px;
  box-shadow: 0 1px 4px rgba(0, 0, 0, .3);
  font-size: 15px;
  line-height: 18px;
}
.map-place { width: 250px; }
.map-place strong { display: block; font-size: 18px; font-weight: 500; margin-bottom: 10px; }
.map-place address { font-style: normal; color: #5b5b5b; margin-bottom: 18px; }
.map-card a { color: #1a73e8; }
.directions { display: flex; flex-direction: column; align-items: center; gap: 5px; padding-top: 3px; }
.satellite {
  position: absolute;
  left: 13px;
  bottom: 13px;
  padding: 2px;
  background: #fff;
  border-radius: 3px;
  box-shadow: 0 2px 6px rgba(0, 0, 0, .5);
}
.zoom {
  position: absolute;
  right: 12px;
  bottom: 30px;
  width: 50px;
  padding: 0 6px;
  background: #fff;
  border-radius: 2px;
  box-shadow: 0 1px 4px rgba(0, 0, 0, .3);
}
.zoom button {
  display: flex;
  align-items: center;
  justify-content: center;
  width: 100%;
  height: 50px;
  padding: 0;
  background: none;
}
.zoom button + button { border-top: 1px solid #e6e6e6; height: 51px; }
.map-terms {
  position: absolute;
  right: 0;
  bottom: 0;
  padding: 0 8px 0 7px;
  display: flex;
  gap: 19px;
  background: rgba(245, 245, 245, .7);
  color: #222;
  font-size: 12px;
  line-height: 17px;
}

/* Contact form */
.contact-grid {
  padding: 104px 12px 89px;
  display: grid;
  grid-template-columns: 2fr 1fr;
  gap: 14px;
}
.contact-form { display: flex; flex-direction: column; align-items: flex-start; }
.contact-form h2 { margin-bottom: 10px; }
.field {
  display: block;
  width: 100%;
  height: 47px;
  margin: 0;
  padding: 8px 15px 7px;
  border: 1px solid #dee2e6;
  border-radius: 7px;
  color: #212529;
  font-size: 20px;
  line-height: 30px;
}
.field::placeholder { color: #5f6469; }
.field.tall { height: 317px; resize: vertical; }
.pair {
  width: 100%;
  padding-right: 19px;
  margin: 27px 0;
  display: grid;
  grid-template-columns: 1fr 1fr;
  gap: 25px;
}
.field.small { padding: 0 10px; border-radius: 5px; font-size: 17px; }
.field.small::placeholder { color: #757575; }
.send {
  margin-top: 26px;
  padding: 0 49px;
  height: 61px;
  border-radius: 5px;
  background: #71cd14;
  color: #fff;
  font-size: 18px;
}
.info { padding: 59px 0 0 30px; display: flex; flex-direction: column; gap: 51px; }
.info-item { display: flex; gap: 43px; }
.info-item svg { margin-top: 10px; fill: #7b7b7b; }
.info h3 { font-size: 20px; line-height: 24px; font-weight: 700; margin-bottom: 10px; }
.info p { color: #808080; }

/* Footer */
.footer { background: #0e0d1e; color: #808080; }
.footer-inner { max-width: 1342px; margin: 0 auto; padding: 126px 0 123px; }
.footer-cols { display: grid; grid-template-columns: repeat(4, 1fr) 2fr; font-size: 17px; }
.footer-cols > div { padding-left: 15px; }
.footer h2 { color: #fff; font-size: 25px; line-height: 30px; }
.footer-cols ul { margin-top: 56px; display: flex; flex-direction: column; gap: 20px; }
.footer-cols p { margin: 46px 0 20px; }
.subscribe { display: flex; align-items: center; }
.subscribe input {
  width: 248px;
  height: 57px;
  padding: 0 15px;
  border: 0;
  background: #34333f;
  font-size: 17px;
}
.subscribe input::placeholder { color: #757575; }
.subscribe button {
  margin-left: -45px;
  width: 124px;
  height: 40px;
  padding: 0;
  background: #71cd14;
  color: #fff;
  font-size: 15px;
}
.footer-bottom {
  margin-top: 107px;
  padding-right: 6px;
  display: flex;
  justify-content: space-between;
  align-items: center;
}
.footer-bottom p { padding-bottom: 5px; color: #e6e6e8; font-size: 20px; }
.footer-bottom p a { color: #71cd14; }
.social { display: flex; gap: 12px; }
.social a {
  width: 55px;
  height: 45px;
  padding-bottom: 3px;
  display: flex;
  align-items: center;
  justify-content: center;
  background: #3e3d48;
}
.social .behance { color: #fff; font-size: 16px; font-weight: 700; }
```
